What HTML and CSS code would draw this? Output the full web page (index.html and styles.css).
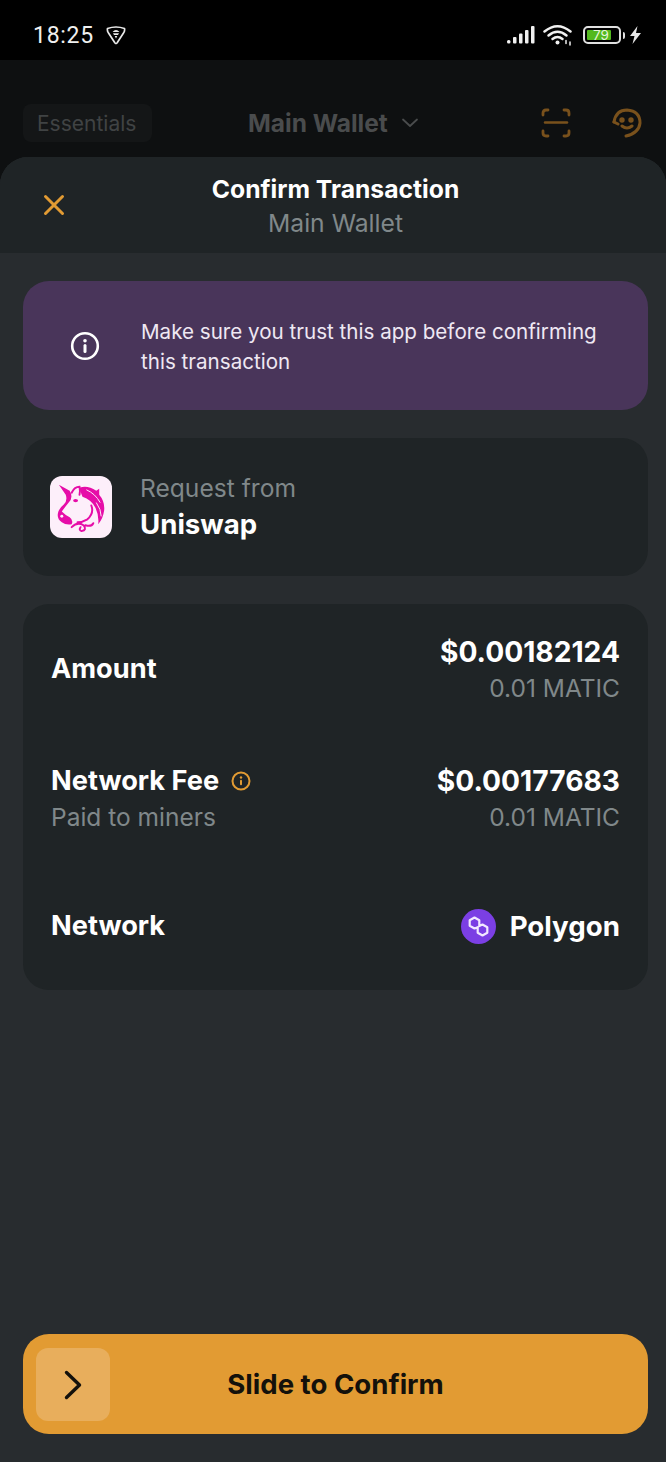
FILE: index.html
```html
<!DOCTYPE html>
<html lang="en">

<head>
  <meta charset="UTF-8">
  <meta name="viewport" content="width=device-width, initial-scale=1.0">
  <title>Confirm Transaction</title>

  <link rel="stylesheet" href="styles.css">
</head>

<body>
  <div class="status-bar">
    <div class="status-left">
      <span class="status-time">18:25</span>
      <svg class="status-shield" width="20" height="20" viewBox="0 0 20 20" fill="none">
        <path d="M1.500 3.500 Q10 .5 18.500 3.500 Q19 6 17.500 8 L11 18 Q10 19 9 18 L2.500 8 Q1 6 1.500 3.500 Z" stroke="#e8e8e8" stroke-width="1.700" stroke-linejoin="round"/>
        <path d="M6.500 7 Q10 3 13.500 7 Z M7 8.300 H13 L12 10 H8 Z M8.700 11 H11.300 L10 13.500 Z" fill="#e8e8e8"/>
      </svg>
    </div>
    <div class="status-right">
      <svg width="28" height="18" viewBox="0 0 28 18" fill="#f0f0f0">
        <rect x="0" y="14" width="3.500" height="3.500" rx="1.500"/>
        <rect x="6" y="11" width="3.500" height="6.500" rx="1"/>
        <rect x="12" y="7.500" width="3.500" height="10" rx="1"/>
        <rect x="18" y="4" width="3.500" height="13.500" rx="1"/>
        <rect x="24" y="0" width="3.500" height="17.500" rx="1"/>
      </svg>
      <svg class="status-wifi" width="30" height="22" viewBox="0 0 30 22" fill="none" stroke="#f0f0f0" stroke-width="2.500" stroke-linecap="round">
        <path d="M1.500 7.500 Q14.500 -3 27.500 7.500"/>
        <path d="M5.500 11.500 Q14.500 4 23.500 11.500"/>
        <path d="M9.500 15 Q14.500 11 19.500 15"/>
        <circle cx="14.500" cy="18.500" r="2" fill="#f0f0f0" stroke="none"/>
        <path d="M23 19.500 V16.500 M27 21 V18" stroke-width="1.500"/>
      </svg>
      <div class="battery">
        <div class="battery-body">
          <div class="battery-fill"></div>
          <span class="battery-num">79</span>
        </div>
        <div class="battery-tip"></div>
      </div>
      <svg class="status-bolt" width="13" height="18" viewBox="0 0 13 18" fill="#e8e8e8">
        <path d="M8.500 0 L1 10 H5.500 L3.500 18 L12 7 H7 Z"/>
      </svg>
    </div>
  </div>

  <div class="wallet-bar">
    <div><span class="wallet-tab">Essentials</span></div>
    <div class="wallet-name">
      <span>Main Wallet</span>
      <svg width="18" height="10" viewBox="0 0 18 10" fill="none" stroke="#4a4c4d" stroke-width="1.800" stroke-linecap="round" stroke-linejoin="round">
        <path d="M2 1.500 L9 8 L16 1.500"/>
      </svg>
    </div>
    <div class="wallet-actions">
      <svg width="30" height="30" viewBox="0 0 30 30" fill="none" stroke="#79511c" stroke-width="2.800" stroke-linecap="round">
        <path d="M2 7 V5 Q2 2 5 2 H7 M23 2 H25 Q28 2 28 5 V7 M2 23 V25 Q2 28 5 28 H7 M23 28 H25 Q28 28 28 25 V23"/>
        <path d="M4 14.500 H26" stroke-width="2.500"/>
      </svg>
      <svg width="30" height="30" viewBox="0 0 30 30" fill="none" stroke="#79511c" stroke-width="3" stroke-linecap="round">
        <path d="M2 14 Q4 2 15 2 Q28 3 28 15 Q27 25 14 28"/>
        <path d="M2 14 L6 16 M10 18 Q15 22 20 18"/>
        <circle cx="10" cy="12" r="1.200" fill="#79511c"/>
        <circle cx="19" cy="12" r="1.200" fill="#79511c"/>
      </svg>
    </div>
  </div>

  <div class="sheet">
    <div class="sheet-header">
      <svg class="sheet-close" width="22" height="22" viewBox="0 0 22 22" fill="none" stroke="#e29b33" stroke-width="3" stroke-linecap="round">
        <path d="M2.500 2.500 L19.500 19.500 M19.500 2.500 L2.500 19.500"/>
      </svg>
      <div class="sheet-title">Confirm Transaction</div>
      <div class="sheet-subtitle">Main Wallet</div>
    </div>

    <div class="sheet-body">
      <div class="notice">
        <svg width="30" height="30" viewBox="0 0 30 30" fill="none">
          <circle cx="15" cy="15" r="12.800" stroke="#fff" stroke-width="2.600"/>
          <circle cx="15" cy="9.800" r="1.800" fill="#fff"/>
          <rect x="13.500" y="13" width="3" height="9" rx="1.500" fill="#fff"/>
        </svg>
        <p>Make sure you trust this app before confirming this transaction</p>
      </div>

      <div class="card request">
        <div class="app-icon">
          <svg width="62" height="62" viewBox="0 0 63 63">
            <path fill="#e60da8" d="M9 9 L20 15 Q24 22 19 27 Q15 32 12 36 Q16 40 20 42 Q24 45 22 49 Q16 50 12 47 Q7 44 8 38 Q9 33 14 29 Q18 25 16 19 Z"/>
            <path fill="none" stroke="#e60da8" stroke-width="2" stroke-linecap="round" d="M22 17 Q25 11 30 11 Q31 16 30 19"/>
            <path fill="#e60da8" d="M30 12 Q38 9 47 15 L50 13 L50 19 Q56 26 55 35 Q54 43 49 49 Q50 40 46 32 Q42 24 33 21 Q31 17 30 12 Z"/>
            <path fill="none" stroke="#fdeffa" stroke-width="1" d="M37 14 Q46 18 51 27 M47 27 Q52 34 52 41"/>
            <path fill="none" stroke="#e60da8" stroke-width="2" stroke-linecap="round" d="M42 30 Q45 38 38 44 Q33 47 28 47"/>
            <path fill="none" stroke="#e60da8" stroke-width="2" stroke-linecap="round" d="M22 52 Q28 46 34 50 Q38 55 32 56 Q29 55 31 52 M36 50 Q42 52 44 48"/>
            <ellipse cx="26" cy="25" rx="2.500" ry="1.700" fill="#e60da8"/>
            <circle cx="12" cy="41" r="1.500" fill="#fdeffa"/>
          </svg>
        </div>
        <div>
          <div class="request-label">Request from</div>
          <div class="request-name">Uniswap</div>
        </div>
      </div>

      <div class="card details">
        <div class="row">
          <div class="row-title row-title-solo">Amount</div>
          <div class="row-values">
            <div class="row-title row-amount">$0.00182124</div>
            <div class="row-sub">0.01 MATIC</div>
          </div>
        </div>
        <div class="row">
          <div>
            <div class="row-title fee-title">
              Network Fee
              <svg width="20" height="20" viewBox="0 0 20 20" fill="none">
                <circle cx="10" cy="10" r="8.500" stroke="#e29b33" stroke-width="2"/>
                <circle cx="10" cy="6.500" r="1.200" fill="#e29b33"/>
                <rect x="9" y="8.800" width="2" height="5.500" rx="1" fill="#e29b33"/>
              </svg>
            </div>
            <div class="row-sub">Paid to miners</div>
          </div>
          <div class="row-values">
            <div class="row-title row-amount">$0.00177683</div>
            <div class="row-sub">0.01 MATIC</div>
          </div>
        </div>
        <div class="row row-network">
          <div class="row-title">Network</div>
          <div class="network-value">
            <svg width="35" height="35" viewBox="0 0 35 35" fill="none">
              <circle cx="17.500" cy="17.500" r="17.500" fill="#7b3fe4"/>
              <path d="M18.300 17 V11.200 L13.500 8.500 L8.700 11.200 V16.800 L13.500 19.500 L16.700 18.200 V23.800 L21.500 26.500 L26.300 23.800 V18.200 L21.500 15.500 Z" stroke="#f2e9ff" stroke-width="2.200" stroke-linejoin="round" stroke-linecap="round"/>
            </svg>
            <span class="row-title network-name">Polygon</span>
          </div>
        </div>
      </div>

      <div class="slider">
        <div class="slider-knob">
          <svg width="18" height="30" viewBox="0 0 18 30" fill="none" stroke="#14110b" stroke-width="3.400" stroke-linecap="round" stroke-linejoin="round">
            <path d="M2.500 2.500 L15.500 15 L2.500 27.500"/>
          </svg>
        </div>
        <span class="slider-label">Slide to Confirm</span>
      </div>
    </div>
  </div>
</body>

</html>
```

FILE: styles.css
```css
* {
  box-sizing: border-box;
}

body {
  margin: 0;
  height: 1462px;
  overflow: hidden;
  display: flex;
  flex-direction: column;
  background-color: #0e1011;
  font-family: "Inter", "Liberation Sans", sans-serif;
  color: #fff;
}

.status-bar {
  height: 60px;
  flex-shrink: 0;
  padding: 10px 24px 0 33px;
  display: flex;
  align-items: center;
  justify-content: space-between;
  background-color: #000;
}

.status-left,
.status-right {
  display: flex;
  align-items: center;
}

.status-left {
  gap: 12px;
}

.status-time {
  font-family: "Roboto", sans-serif;
  font-size: 23px;
  letter-spacing: 0.7px;
  color: #f0f0f0;
}

.status-right {
  gap: 8px;
}

.status-wifi {
  margin-right: 2px;
}

.status-bolt {
  margin-left: -4px;
}

.battery {
  display: flex;
  align-items: center;
  gap: 2px;
}

.battery-body {
  position: relative;
  width: 38px;
  height: 18px;
  padding: 2px;
  border: 2px solid #e0e0e0;
  border-radius: 5px;
}

.battery-fill {
  width: 79%;
  height: 100%;
  background-color: #53b91f;
  border-radius: 1px;
}

.battery-num {
  position: absolute;
  top: -2px;
  left: 8px;
  font-size: 13.500px;
  line-height: 18px;
  color: #e6f5dc;
}

.battery-tip {
  width: 2px;
  height: 7px;
  background-color: #e0e0e0;
  border-radius: 0 2px 2px 0;
}

.wallet-bar {
  height: 97px;
  flex-shrink: 0;
  padding: 29px 24px 0 23px;
  display: grid;
  grid-template-columns: 225px 1fr auto;
  align-items: center;
}

.wallet-tab {
  display: inline-block;
  padding: 9px 16px 7px 14px;
  font-size: 21px;
  line-height: 22px;
  color: #404344;
  background-color: #141617;
  border-radius: 8px;
}

.wallet-name {
  display: flex;
  align-items: center;
  gap: 13px;
  font-size: 24.500px;
  line-height: 30px;
  font-weight: 700;
  color: #4a4c4d;
}

.wallet-actions {
  display: flex;
  gap: 41px;
}

.wallet-actions svg {
  display: block;
}

.sheet {
  flex: 1;
  display: flex;
  flex-direction: column;
  background-color: #282c2f;
  border-radius: 28px 28px 0 0;
  overflow: hidden;
}

.sheet-header {
  position: relative;
  height: 96px;
  flex-shrink: 0;
  padding: 16px 0 0 5px;
  text-align: center;
  background-color: #1f2426;
}

.sheet-close {
  position: absolute;
  top: 37px;
  left: 43px;
}

.sheet-title {
  font-size: 24.700px;
  line-height: 32px;
  font-weight: 700;
}

.sheet-subtitle {
  font-size: 24.700px;
  line-height: 37px;
  color: #80888a;
}

.sheet-body {
  flex: 1;
  padding: 28px 18px 28px 23px;
  display: flex;
  flex-direction: column;
  gap: 28px;
}

.notice {
  height: 129px;
  padding: 2px 40px 0 47px;
  display: flex;
  align-items: center;
  gap: 41px;
  background-color: #49355a;
  border-radius: 26px;
}

.notice svg {
  flex-shrink: 0;
  margin-top: -2px;
}

.notice p {
  margin: 0;
  font-size: 20.600px;
  line-height: 30px;
  color: #efe8f3;
}

.card {
  background-color: #1f2426;
  border-radius: 26px;
}

.request {
  height: 138px;
  padding: 0 27px;
  display: flex;
  align-items: center;
  gap: 28px;
}

.app-icon {
  width: 62px;
  height: 62px;
  background-color: #fdeffa;
  border-radius: 12px;
  overflow: hidden;
}

.app-icon svg {
  display: block;
}

.request-label {
  margin-top: 1px;
  font-size: 24.600px;
  line-height: 30px;
  color: #80888a;
}

.request-name {
  margin-top: 3px;
  font-size: 27.600px;
  line-height: 36px;
  font-weight: 700;
}

.details {
  height: 386px;
  padding: 30px 28px;
  display: flex;
  flex-direction: column;
  gap: 57px;
}

.row {
  display: flex;
  justify-content: space-between;
  align-items: flex-start;
}

.row-title {
  font-size: 27.200px;
  line-height: 36px;
  font-weight: 700;
}

.row-amount {
  font-size: 28.200px;
}

.row-title-solo {
  margin-top: 17px;
}

.row-sub {
  font-size: 24.500px;
  line-height: 36px;
  color: #80888a;
}

.row-values {
  text-align: right;
}

.fee-title {
  display: flex;
  align-items: center;
  gap: 12px;
}

.row-network {
  align-items: center;
  margin-top: 16px;
}

.network-value {
  display: flex;
  align-items: center;
  gap: 14px;
}

.network-value svg {
  display: block;
}

.network-name {
  font-size: 27.700px;
}

.slider {
  position: relative;
  margin-top: auto;
  height: 100px;
  display: flex;
  align-items: center;
  justify-content: center;
  background-color: #e29b33;
  border-radius: 26px;
}

.slider-knob {
  position: absolute;
  top: 14px;
  left: 13px;
  width: 74px;
  height: 73px;
  display: flex;
  align-items: center;
  justify-content: center;
  background-color: #e8ae5c;
  border-radius: 12px;
}

.slider-label {
  font-size: 27.600px;
  font-weight: 700;
  color: #14110b;
}
```
